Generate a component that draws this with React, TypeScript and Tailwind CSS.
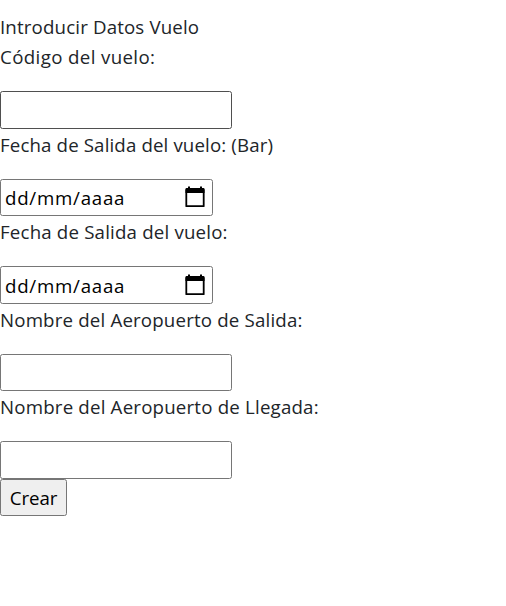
import React from "react";

const control = "h-[37.5px] rounded-[2.5px] border border-[#767676] outline-none";

function Field({ label, tracking, children }: { label: string; tracking: string; children: React.ReactNode }) {
  return (
    <div>
      <label className={`mb-[18px] block leading-[32px] whitespace-nowrap ${tracking}`}>{label}</label>
      {children}
    </div>
  );
}

function TextInput({ border = "border-[#767676]" }: { border?: string }) {
  return <input type="text" className={`block h-[37.5px] w-[232px] rounded-[2.5px] border bg-white px-1 outline-none ${border}`} />;
}

function DateInput() {
  return (
    <div className={`${control} flex w-[213px] items-center justify-between bg-white pr-[7px] pl-1 text-black`}>
      <span className="leading-[31px] tracking-[0.75px]">dd/mm/aaaa</span>
      <svg viewBox="0 0 20 22" className="mb-px h-[22px] w-5" fill="none">
        <path d="M1.3 4h17.4v16.2H1.3z" stroke="currentColor" strokeWidth="1.8" strokeLinejoin="round" />
        <path d="M1.5 2H3V.5h2V2h10V.5h2V2h1.5q1 0 1 1v4H.5V3q0-1 1-1z" fill="currentColor" />
      </svg>
    </div>
  );
}

export default function App() {
  return (
    <main className="min-h-screen bg-white pt-[11.25px] font-['Open_Sans','Noto_Sans',sans-serif] text-[18.7px] leading-[30px] text-[#212529]">
      <h1 className="h-[30px] leading-[32px] tracking-[0.15px]">Introducir Datos Vuelo</h1>
      <form>
        <Field label="Código del vuelo:" tracking="tracking-[0.37px]"><TextInput border="border-[#4f4f4f]" /></Field>
        <Field label="Fecha de Salida del vuelo: (Bar)" tracking="tracking-[0.13px]"><DateInput /></Field>
        <Field label="Fecha de Salida del vuelo:" tracking="tracking-[0.18px]"><DateInput /></Field>
        <Field label="Nombre del Aeropuerto de Salida:" tracking="tracking-[0.17px]"><TextInput /></Field>
        <Field label="Nombre del Aeropuerto de Llegada:" tracking="tracking-[0.19px]"><TextInput /></Field>
        <button type="button" className={`${control} block w-[67px] bg-[#efefef] text-center tracking-[-0.1px] text-black`}>Crear</button>
      </form>
    </main>
  );
}
